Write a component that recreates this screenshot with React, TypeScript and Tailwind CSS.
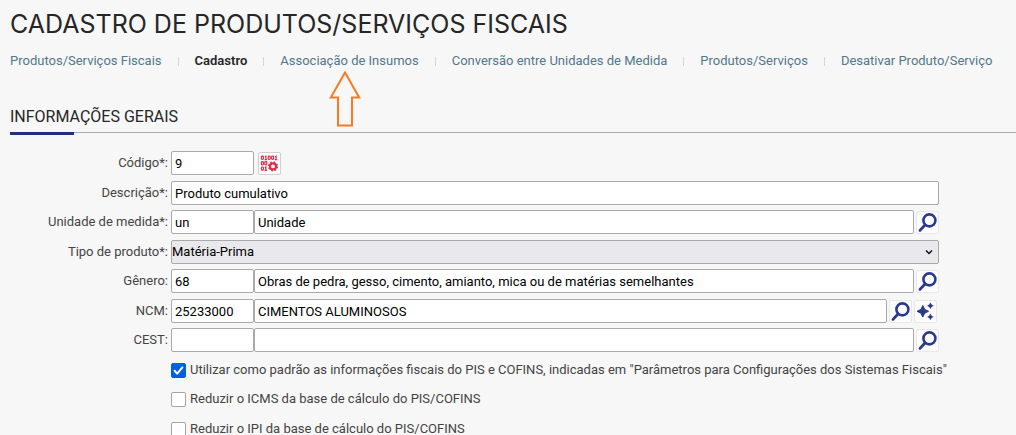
import React, { useState } from 'react';

const tabs = [
  'Produtos/Serviços Fiscais',
  'Cadastro',
  'Associação de Insumos',
  'Conversão entre Unidades de Medida',
  'Produtos/Serviços',
  'Desativar Produto/Serviço',
];

const inputClass =
  'h-6 min-w-0 rounded-[2px] border border-[#a9a9a9] bg-white px-[3px] text-[13px] text-black outline-none focus:border-[#29398f]';

const SearchIcon = () => (
  <svg viewBox="0 0 21 21" className="h-[21px] w-[21px]" fill="none" stroke="#29398f" strokeLinecap="round">
    <circle cx="12.4" cy="8.4" r="6" strokeWidth="2.6" />
    <path d="M8 13 3 18.4" strokeWidth="2.8" />
  </svg>
);

const SparklesIcon = () => (
  <svg viewBox="0 0 21 21" className="h-[21px] w-[21px]" fill="#29398f">
    <path d="M7.8 4.5 9.7 8.4 13.6 10.3 9.7 12.2 7.8 16.1 5.9 12.2 2 10.3 5.9 8.4Z" stroke="#29398f" strokeWidth="1" strokeLinejoin="round" />
    <path d="M15.4 1.4 16.6 3.5 18.7 4.7 16.6 5.9 15.4 8 14.2 5.9 12.1 4.7 14.2 3.5Z" />
    <path d="M15.4 12.6 16.6 14.7 18.7 15.9 16.6 17.1 15.4 19.2 14.2 17.1 12.1 15.9 14.2 14.7Z" />
  </svg>
);

const CodeIcon = () => (
  <svg viewBox="0 0 21 21" className="h-[21px] w-[21px]" fill="none" stroke="#d9304c">
    <g strokeWidth="1.2">
      <rect x="2.4" y="3.2" width="2" height="3.2" rx="0.8" />
      <path d="M5.8 3.8 6.9 3.2V6.8M5.6 6.6H8.1" />
      <rect x="9.2" y="3.2" width="2" height="3.2" rx="0.8" />
      <rect x="12.6" y="3.2" width="2" height="3.2" rx="0.8" />
      <path d="M16 3.8 17.1 3.2V6.8M15.8 6.6H18.3" />
      <rect x="2.4" y="8.6" width="2" height="3.2" rx="0.8" />
      <rect x="5.8" y="8.6" width="2" height="3.2" rx="0.8" />
      <rect x="2.4" y="14" width="2" height="3.2" rx="0.8" />
      <path d="M5.8 14.6 6.9 14V17.6M5.6 17.4H8.1" />
    </g>
    <circle cx="14" cy="13.4" r="3" strokeWidth="2.2" />
    <circle cx="14" cy="13.4" r="4.4" strokeWidth="1.4" strokeDasharray="1.8 1.66" />
  </svg>
);

interface IconButtonProps {
  label: string;
  className?: string;
  children: React.ReactNode;
}

const IconButton: React.FC<IconButtonProps> = ({ label, className = 'border-[#e8e8e8]', children }) => (
  <button
    type="button"
    aria-label={label}
    className={`flex h-[23px] w-[23px] shrink-0 items-center justify-center rounded-[2px] border bg-[#fcfcfc] ${className}`}
  >
    {children}
  </button>
);

interface RowProps {
  label: string;
  id: string;
  children: React.ReactNode;
}

const Row: React.FC<RowProps> = ({ label, id, children }) => (
  <div className="flex h-6 items-center gap-[3px]">
    <label htmlFor={id} className="w-[168px] shrink-0 text-right text-[#444]">
      {label}:
    </label>
    <div className="flex min-w-0 flex-1 items-center gap-[2px]">{children}</div>
  </div>
);

interface CodePairProps {
  id: string;
  label: string;
  code: string;
  text: string;
}

const CodePair: React.FC<CodePairProps> = ({ id, label, code, text }) => (
  <div className="flex min-w-0 flex-1">
    <input id={id} className={`${inputClass} w-[83px]`} defaultValue={code} />
    <input aria-label={`${label} - descrição`} className={`${inputClass} flex-1`} defaultValue={text} />
  </div>
);

interface CheckRowProps {
  label: string;
  defaultChecked?: boolean;
}

const CheckRow: React.FC<CheckRowProps> = ({ label, defaultChecked = false }) => {
  const [checked, setChecked] = useState(defaultChecked);

  return (
    <label className="ml-[171px] flex h-6 items-center gap-1 whitespace-nowrap text-[#444]">
      <span className="grid h-[15px] w-[15px] shrink-0">
        <input
          type="checkbox"
          checked={checked}
          onChange={(e) => setChecked(e.target.checked)}
          className="col-start-1 row-start-1 h-[15px] w-[15px] appearance-none rounded-[2px] border border-[#a3a3aa] bg-white checked:border-[#0060df] checked:bg-[#0060df]"
        />
        {checked && (
          <svg viewBox="0 0 15 15" className="pointer-events-none col-start-1 row-start-1" fill="none" stroke="#fff" strokeWidth="2" strokeLinecap="round" strokeLinejoin="round">
            <path d="M3.6 7.8 6.2 10.6 11.4 4.4" />
          </svg>
        )}
      </span>
      {label}
    </label>
  );
};

export default function App() {
  const [active, setActive] = useState('Cadastro');

  return (
    <main className="h-screen overflow-hidden bg-[#f7f7f7] font-['Roboto','Liberation_Sans',sans-serif] text-[13px] leading-5">
      <h1 className="px-[10px] pt-2 font-['Inter','Liberation_Sans',sans-serif] text-[25px] leading-8 text-[#262626]">
        CADASTRO DE PRODUTOS/SERVIÇOS FISCAIS
      </h1>

      <nav className="flex items-center gap-4 px-[10px] pt-[11px] whitespace-nowrap">
        {tabs.map((tab, i) => (
          <React.Fragment key={tab}>
            {i > 0 && <span className="h-[9px] w-px shrink-0 bg-[#d5d5d5]" />}
            <a
              href="#"
              onClick={() => setActive(tab)}
              className={`relative ${tab === active ? 'font-semibold text-[#262626]' : 'text-[#527789]'}`}
            >
              {tab}
              {tab === 'Associação de Insumos' && (
                <svg
                  viewBox="0 0 32 58"
                  className="pointer-events-none absolute top-[19px] left-[49px] h-[58px] w-8"
                  fill="none"
                  stroke="#fb7a1e"
                  strokeWidth="2"
                >
                  <path d="M16 2.5 30.2 27.5H23V55.5H9V27.5H1.8Z" />
                </svg>
              )}
            </a>
          </React.Fragment>
        ))}
      </nav>

      <section className="pt-8 pl-[10px]">
        <div className="border-b border-[#aaadad]">
          <h2 className="h-[29px] pt-[2px] text-base text-[#262626]">INFORMAÇÕES GERAIS</h2>
        </div>
        <div className="-mt-px h-[3px] w-16 bg-[#222f85]" />
      </section>

      <form className="grid auto-rows-[30px_29px] grid-cols-[minmax(0,1fr)] pt-4 pr-[77px]">
        <Row label="Código*" id="codigo">
          <input id="codigo" className={`${inputClass} mr-[2px] w-[83px]`} defaultValue="9" />
          <IconButton label="Gerar código" className="border-[#cfcfcf]">
            <CodeIcon />
          </IconButton>
        </Row>
        <Row label="Descrição*" id="descricao">
          <input id="descricao" className={`${inputClass} flex-1`} defaultValue="Produto cumulativo" />
        </Row>
        <Row label="Unidade de medida*" id="unidade">
          <CodePair id="unidade" label="Unidade de medida" code="un" text="Unidade" />
          <IconButton label="Pesquisar unidade">
            <SearchIcon />
          </IconButton>
        </Row>
        <Row label="Tipo de produto*" id="tipo">
          <div className="grid min-w-0 flex-1 items-center">
            <select
              id="tipo"
              className="col-start-1 row-start-1 h-6 w-full appearance-none rounded-[2px] border border-[#a9a9a9] bg-[#e9e9ed] text-[13px] text-black"
            >
              <option>Matéria-Prima</option>
            </select>
            <svg
              viewBox="0 0 8 8"
              className="pointer-events-none col-start-1 row-start-1 mr-[6px] h-2 w-2 justify-self-end"
              fill="none"
              stroke="#111"
              strokeWidth="1.5"
            >
              <path d="M1 2.5 4 5.5 7 2.5" />
            </svg>
          </div>
        </Row>
        <Row label="Gênero" id="genero">
          <CodePair
            id="genero"
            label="Gênero"
            code="68"
            text="Obras de pedra, gesso, cimento, amianto, mica ou de matérias semelhantes"
          />
          <IconButton label="Pesquisar gênero">
            <SearchIcon />
          </IconButton>
        </Row>
        <Row label="NCM" id="ncm">
          <CodePair id="ncm" label="NCM" code="25233000" text="CIMENTOS ALUMINOSOS" />
          <IconButton label="Pesquisar NCM">
            <SearchIcon />
          </IconButton>
          <IconButton label="Sugerir NCM" className="mr-[2px] border-[#e8e8e8]">
            <SparklesIcon />
          </IconButton>
        </Row>
        <Row label="CEST" id="cest">
          <CodePair id="cest" label="CEST" code="" text="" />
          <IconButton label="Pesquisar CEST">
            <SearchIcon />
          </IconButton>
        </Row>
        <CheckRow
          defaultChecked
          label={'Utilizar como padrão as informações fiscais do PIS e COFINS, indicadas em "Parâmetros para Configurações dos Sistemas Fiscais"'}
        />
        <CheckRow label="Reduzir o ICMS da base de cálculo do PIS/COFINS" />
        <CheckRow label="Reduzir o IPI da base de cálculo do PIS/COFINS" />
      </form>
    </main>
  );
}
